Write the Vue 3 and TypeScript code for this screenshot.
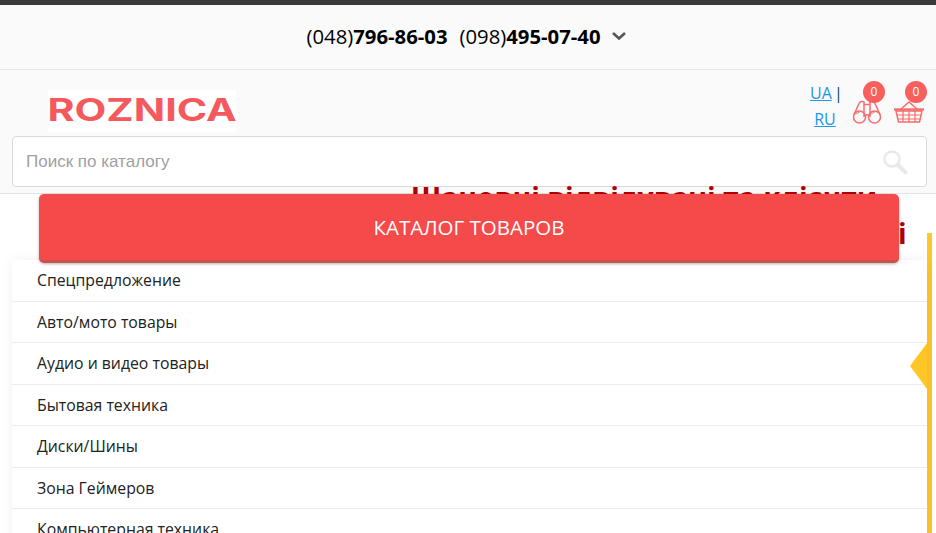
<script setup lang="ts">
const categories: string[] = [
  'Спецпредложение',
  'Авто/мото товары',
  'Аудио и видео товары',
  'Бытовая техника',
  'Диски/Шины',
  'Зона Геймеров',
  'Компьютерная техника',
  'Мобильные телефоны',
]
</script>

<template>
  <div class="page">
    <div class="topline"></div>

    <div class="phones">
      <span class="phone">(048)<b>796-86-03</b></span>
      <span class="phone">(098)<b>495-07-40</b></span>
      <svg class="chevron" width="16" height="10" viewBox="0 0 16 10">
        <path d="M2 2l6 5.5L14 2" fill="none" stroke="#555" stroke-width="2.6" />
      </svg>
    </div>

    <header class="header">
      <div class="header-top">
        <div class="logo"><span>ROZNICA</span></div>
        <div class="tools">
          <div class="langs">
            <div><a href="#">UA</a> |</div>
            <div><a href="#">RU</a></div>
          </div>
          <div class="tool">
            <span class="badge">0</span>
            <svg width="30" height="24" viewBox="0 0 30 24" fill="none" stroke="#f76c6c" stroke-width="1.5">
              <circle cx="7.5" cy="17" r="6" />
              <circle cx="22.5" cy="17" r="6" />
              <path d="M4 14.5a4 4 0 0 1 3.5-2M19 14.5a4 4 0 0 1 3.5-2" stroke-width="1" />
              <path d="M1.8 15L7 3.5Q8 1 10.5 1.5L12 2v15M28.2 15L23 3.5Q22 1 19.5 1.5L18 2v15M12 4.5h6M12 15h6" />
            </svg>
          </div>
          <div class="tool">
            <span class="badge">0</span>
            <svg width="30" height="24" viewBox="0 0 30 24" fill="none" stroke="#f76c6c" stroke-width="1.5">
              <path d="M7 9l8-7 8 7" />
              <path d="M0 9.5h30" stroke-width="2.4" />
              <path d="M2 11l2.5 11h21L28 11z" />
              <path d="M9 11v11M15 11v11M21 11v11M3 15h24M4 19h22" stroke-width="1.2" />
            </svg>
          </div>
        </div>
      </div>

      <div class="search">
        <span class="search-text">Поиск по каталогу</span>
        <svg width="26" height="26" viewBox="0 0 26 26" fill="none" stroke="#e9e9e9">
          <circle cx="10" cy="10" r="7.5" stroke-width="2.6" />
          <path d="M16 16l7.5 7.5" stroke-width="4" stroke-linecap="round" />
        </svg>
      </div>
    </header>

    <main class="content">
      <div class="notice">
        <h1>Шановні відвідувачі та клієнти<br />нашого інтернет-магазину Розниці</h1>
      </div>
      <div class="rail"></div>

      <div class="catalog">
        <div class="catalog-btn">КАТАЛОГ ТОВАРОВ</div>
        <ul class="catalog-list">
          <li v-for="item in categories" :key="item">{{ item }}</li>
        </ul>
        <span class="marker"></span>
      </div>
    </main>
  </div>
</template>

<style>
html,
body {
  margin: 0;
  background: #fff;
  overflow: hidden;
}
</style>

<style scoped>
.page {
  width: 936px;
  height: 533px;
  overflow: hidden;
  font-family: "Open Sans", sans-serif;
  color: #000;
}
.topline {
  height: 5px;
  background: #3a3a3a;
}
.phones {
  height: 65px;
  box-sizing: border-box;
  background: #fafafa;
  border-bottom: 1px solid #e6e6e6;
  display: flex;
  align-items: center;
  justify-content: center;
  gap: 12px;
  font-size: 20.3px;
  padding-bottom: 3px;
}
.phone b {
  font-weight: 700;
}
.chevron {
  margin-left: -2px;
  margin-right: 3px;
}
.header {
  height: 124px;
  box-sizing: border-box;
  background: #fafafa;
  border-bottom: 1px solid #e6e6e6;
  padding: 0 9px 0 12px;
}
.header-top {
  height: 66px;
  padding-right: 3px;
  display: flex;
  justify-content: space-between;
}
.logo {
  margin: 20px 0 0 36px;
  width: 188px;
  height: 42px;
  background: #fff;
  color: #f4595e;
  font-family: "Inter", sans-serif;
  font-weight: 700;
  font-size: 31px;
  line-height: 40px;
  text-align: center;
}
.logo span {
  display: inline-block;
  white-space: nowrap;
  transform: scaleX(1.33);
}
.tools {
  display: flex;
  align-items: flex-start;
}
.langs {
  margin-top: 10px;
  width: 30px;
  font-size: 16px;
  line-height: 26px;
  color: #00457c;
  text-align: center;
  white-space: nowrap;
  word-spacing: -2px;
}
.langs a {
  color: #2196e3;
  text-decoration: underline;
}
.tool {
  position: relative;
  width: 30px;
  margin-left: 12px;
  padding-top: 30px;
  height: 24px;
}
.badge {
  position: absolute;
  top: 11px;
  left: 11px;
  width: 22px;
  height: 22px;
  border-radius: 50%;
  background: #f85f5f;
  color: #fff;
  font-size: 12px;
  line-height: 22px;
  text-align: center;
  z-index: 1;
}
.search {
  height: 51px;
  box-sizing: border-box;
  background: #fff;
  border: 1px solid #d9d9d9;
  border-radius: 4px;
  display: flex;
  align-items: center;
  justify-content: space-between;
  padding: 0 18px 0 13px;
}
.search-text {
  font-family: "Liberation Sans", Arial, sans-serif;
  font-size: 17px;
  color: #a0a0a0;
}
.content {
  position: relative;
  height: 339px;
  display: flex;
  justify-content: flex-end;
}
.notice {
  width: 584px;
  margin-top: -15px;
}
.notice h1 {
  margin: 0;
  font-family: "Open Sans", sans-serif;
  font-size: 28.3px;
  line-height: 36px;
  color: #b00000;
  text-align: center;
  white-space: nowrap;
}
.rail {
  position: absolute;
  top: 39px;
  left: 927px;
  width: 5px;
  height: 320px;
  background: #ffc627;
}
.catalog {
  position: absolute;
  top: 0;
  left: 12px;
  width: 915px;
}
.catalog-btn {
  margin-left: 27px;
  width: 860px;
  height: 69px;
  box-sizing: border-box;
  background: #f54a4a;
  border-bottom: 3px solid #cd5050;
  border-radius: 5px;
  box-shadow: 0 1px 3px rgba(0, 0, 0, 0.3);
  color: #fff;
  font-size: 20.5px;
  font-weight: 500;
  line-height: 66px;
  text-align: center;
  position: relative;
  z-index: 1;
}
.catalog-list {
  margin: -3px 0 0;
  padding: 0;
  list-style: none;
  background: #fff;
  box-shadow: 0 0 12px rgba(0, 0, 0, 0.06);
}
.catalog-list li {
  height: 41.5px;
  box-sizing: border-box;
  padding-left: 25px;
  border-bottom: 1px solid #ececec;
  font-size: 15.8px;
  line-height: 41.6px;
  color: #222;
}
.marker {
  position: absolute;
  top: 149px;
  right: 0;
  width: 0;
  height: 0;
  border-style: solid;
  border-width: 23px 17px 23px 0;
  border-color: transparent #ffc627 transparent transparent;
}
</style>
